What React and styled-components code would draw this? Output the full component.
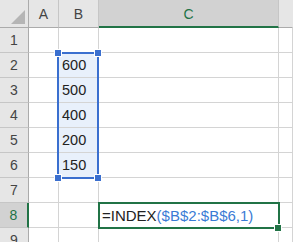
import styled, { createGlobalStyle } from 'styled-components';

const Global = createGlobalStyle`
  html, body { margin: 0; padding: 0; background: #fff; }
  body { font-family: "Liberation Sans", Arial, sans-serif; }
`;

const Sheet = styled.div`
  position: relative;
  width: 293px;
  height: 242px;
  overflow: hidden;
  display: grid;
  grid-template-columns: 29px 30px 40px 180px 1fr;
  grid-template-rows: 28px repeat(9, 25px);
`;

const Corner = styled.div`
  position: relative;
  background: #e6e6e6;
  border-right: 1px solid #ababab;
  border-bottom: 1px solid #ababab;
  &::after {
    content: '';
    position: absolute;
    right: 3px;
    bottom: 3px;
    border-style: solid;
    border-width: 0 0 14px 14px;
    border-color: transparent transparent #b5b5b5 transparent;
  }
`;

const ColHead = styled.div`
  display: flex;
  align-items: center;
  justify-content: center;
  font-size: 14px;
  color: ${(p) => (p.$active ? '#217346' : '#444')};
  background: ${(p) => (p.$active ? '#d2d2d2' : '#e6e6e6')};
  border-right: 1px solid ${(p) => (p.$last ? 'transparent' : '#c6c6c6')};
  border-bottom: ${(p) => (p.$active ? '2px solid #217346' : '1px solid #ababab')};
  box-sizing: border-box;
  padding-top: ${(p) => (p.$active ? '1px' : '0')};
`;

const RowHead = styled.div`
  display: flex;
  align-items: center;
  justify-content: center;
  font-size: 14px;
  color: ${(p) => (p.$active ? '#217346' : '#444')};
  background: ${(p) => (p.$active ? '#d2d2d2' : '#e6e6e6')};
  border-bottom: 1px solid #c6c6c6;
  border-right: ${(p) => (p.$active ? '2px solid #217346' : '1px solid #ababab')};
  box-sizing: border-box;
`;

const Cell = styled.div`
  display: flex;
  align-items: center;
  padding-left: 3px;
  font-size: ${(p) => (p.$formula ? '15px' : '14.5px')};
  color: #222;
  white-space: nowrap;
  background: ${(p) => (p.$sel ? '#e8f0fb' : '#fff')};
  border-right: 1px solid #d4d4d4;
  border-bottom: 1px solid #d4d4d4;
  box-sizing: border-box;
`;

const Ref = styled.span`
  color: #3a7bd5;
`;

const Frame = styled.div`
  position: absolute;
  box-sizing: border-box;
  border: 2px solid ${(p) => p.$color};
  pointer-events: none;
`;

const Handle = styled.div`
  position: absolute;
  width: 6px;
  height: 6px;
  background: ${(p) => p.$color};
  box-shadow: 0 0 0 1px #fff;
`;

const BLUE = '#3a6fcf';
const GREEN = '#217346';

const values = ['', '600', '500', '400', '200', '150', '', '', ''];

export default function App() {
  return (
    <>
      <Global />
      <Sheet>
        <Corner />
        <ColHead>A</ColHead>
        <ColHead>B</ColHead>
        <ColHead $active>C</ColHead>
        <ColHead $last />
        {values.map((v, i) => {
          const row = i + 1;
          return [
            <RowHead key={`h${row}`} $active={row === 8}>{row}</RowHead>,
            <Cell key={`a${row}`} />,
            <Cell key={`b${row}`} $sel={row >= 2 && row <= 6}>{v}</Cell>,
            <Cell key={`c${row}`} $formula={row === 8}>
              {row === 8 && (
                <>
                  =INDEX<Ref>($B$2:$B$6,1)</Ref>
                </>
              )}
            </Cell>,
            <Cell key={`d${row}`} />,
          ];
        })}

        <Frame $color={BLUE} style={{ left: 57, top: 52, width: 42, height: 127 }} />
        <Handle $color={BLUE} style={{ left: 55, top: 50 }} />
        <Handle $color={BLUE} style={{ left: 95, top: 50 }} />
        <Handle $color={BLUE} style={{ left: 55, top: 175 }} />
        <Handle $color={BLUE} style={{ left: 95, top: 175 }} />

        <Frame $color={GREEN} style={{ left: 98, top: 202, width: 182, height: 27 }} />
        <Handle $color={GREEN} style={{ left: 275, top: 225 }} />
      </Sheet>
    </>
  );
}
